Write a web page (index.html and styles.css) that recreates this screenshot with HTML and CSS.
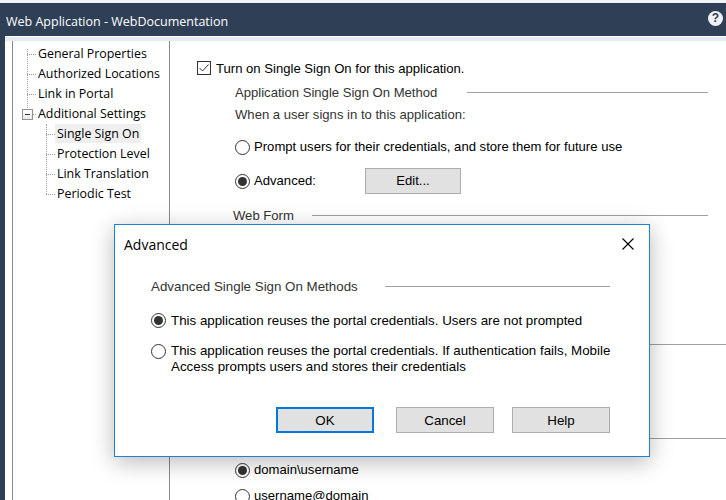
FILE: index.html
```html
<!DOCTYPE html>
<html>
<head>
<meta charset="utf-8">
<link rel="stylesheet" href="styles.css">
</head>
<body>
<div class="app">
  <div class="topstrip"></div>
  <div class="titlebar">
    <span class="title">Web Application - WebDocumentation</span>
    <span class="help">?</span>
  </div>
  <div class="frame">
    <div class="band"></div>
    <div class="main">
      <div class="tree">
        <ul class="tl tl1">
          <li class="tn"><span class="lbl">General Properties</span></li>
          <li class="tn"><span class="lbl">Authorized Locations</span></li>
          <li class="tn"><span class="lbl">Link in Portal</span></li>
          <li class="tn"><span class="exp"></span><span class="lbl">Additional Settings</span></li>
        </ul>
        <ul class="tl tl2">
          <li class="tn"><span class="lbl sel">Single Sign On</span></li>
          <li class="tn"><span class="lbl">Protection Level</span></li>
          <li class="tn"><span class="lbl">Link Translation</span></li>
          <li class="tn"><span class="lbl">Periodic Test</span></li>
        </ul>
      </div>
      <div class="pane">
        <div class="chk-row">
          <span class="checkbox"><svg width="12" height="12" viewBox="0 0 12 12"><polyline points="1.5,6 4.5,9 10.5,2.5" fill="none" stroke="#333" stroke-width="1"/></svg></span>
          <span>Turn on Single Sign On for this application.</span>
        </div>
        <div class="sect">
          <div class="heading h-app"><span class="htext">Application Single Sign On Method</span><span class="rule"></span></div>
          <div class="row when">When a user signs in to this application:</div>
          <div class="row opt r1"><span class="radio"></span><span>Prompt users for their credentials, and store them for future use</span></div>
          <div class="row opt adv"><span class="radio on"></span><span class="adv-label">Advanced:</span><span class="btn edit">Edit...</span></div>
          <div class="heading h-wf"><span class="htext">Web Form</span><span class="rule"></span></div>
          <div class="divider d1"></div>
          <div class="divider d2"></div>
          <div class="row opt dom"><span class="radio on"></span><span>domain\username</span></div>
          <div class="row opt usr"><span class="radio"></span><span>username@domain</span></div>
        </div>
      </div>
    </div>
  </div>

  <div class="dialog">
    <div class="dlg-title">
      <span>Advanced</span>
      <svg class="close" width="12" height="12" viewBox="0 0 12 12"><path d="M0.5 0.5 L11.5 11.5 M11.5 0.5 L0.5 11.5" stroke="#000" stroke-width="1.1" fill="none"/></svg>
    </div>
    <div class="dlg-body">
      <div class="heading dh"><span class="htext">Advanced Single Sign On Methods</span><span class="rule"></span></div>
      <div class="opt d-r1"><span class="radio on"></span><span>This application reuses the portal credentials. Users are not prompted</span></div>
      <div class="opt d-r2"><span class="radio"></span><span class="two">This application reuses the portal credentials. If authentication fails, Mobile<br>Access prompts users and stores their credentials</span></div>
      <div class="btns">
        <span class="btn dbtn ok">OK</span>
        <span class="btn dbtn">Cancel</span>
        <span class="btn dbtn">Help</span>
      </div>
    </div>
  </div>
</div>
</body>
</html>
```

FILE: styles.css
```css
html, body {
  margin: 0;
  padding: 0;
}
body {
  width: 726px;
  height: 500px;
  overflow: hidden;
  background: #fff;
  font-family: "Liberation Sans", Arial, sans-serif;
  font-size: 13.1px;
  color: #000;
}
.app {
  position: relative;
  height: 500px;
}
.topstrip {
  height: 3px;
  background: #f3f4f7;
}
.titlebar {
  height: 33px;
  background: #2e3f56;
  color: #fff;
  display: flex;
  align-items: center;
  justify-content: space-between;
  padding: 0 3px 0 6px;
  font-family: "Open Sans", sans-serif;
  font-size: 12.5px;
}
.title {
  padding-top: 4px;
}
.help {
  width: 15px;
  height: 15px;
  margin-top: -2px;
  border-radius: 50%;
  background: #eef2f7;
  color: #2e3f56;
  font-weight: bold;
  font-size: 12px;
  line-height: 15px;
  text-align: center;
  font-family: "Liberation Sans", sans-serif;
}
.frame {
  border-left: 5px solid #2e3f56;
  height: 464px;
}
.band {
  height: 4px;
  border-top: 1px solid #fff;
  background: #e3eaf0;
}
.main {
  display: flex;
  padding-left: 7px;
  height: 459px;
}
.tree {
  width: 156px;
  border-left: 1px solid #8a8a8a;
  border-right: 1px solid #8a8a8a;
  padding-top: 3px;
  font-family: "Open Sans", sans-serif;
  font-size: 12.4px;
  color: #000;
}
.tl {
  list-style: none;
  margin: 0;
  padding: 0;
  position: relative;
}
.tl::before {
  content: "";
  position: absolute;
  left: 14px;
  top: 5px;
  bottom: 10px;
  border-left: 1px dotted #a0a0a0;
}
.tl2::before {
  left: 33px;
  top: 0;
}
.tn {
  position: relative;
  height: 20px;
  line-height: 20px;
  padding-left: 23px;
  white-space: nowrap;
}
.tl2 .tn {
  padding-left: 42px;
}
.tn::before {
  content: "";
  position: absolute;
  left: 14px;
  top: 10px;
  width: 9px;
  border-top: 1px dotted #a0a0a0;
}
.tl2 .tn::before {
  left: 33px;
}
.lbl {
  display: inline-block;
  padding: 0 2px;
  line-height: 19px;
}
.sel {
  background: #efefef;
}
.exp {
  position: absolute;
  left: 9px;
  top: 5px;
  width: 9px;
  height: 9px;
  border: 1px solid #919191;
  background: linear-gradient(#fff, #eaeaea);
  z-index: 1;
}
.exp::after {
  content: "";
  position: absolute;
  left: 2px;
  top: 4px;
  width: 5px;
  height: 1px;
  background: #333;
}
.pane {
  flex: 1;
  padding: 0 18px 0 27px;
}
.chk-row {
  display: flex;
  align-items: center;
  gap: 5px;
  height: 20px;
  margin-top: 17px;
}
.checkbox {
  width: 14px;
  height: 14px;
  box-sizing: border-box;
  border: 1px solid #333;
  display: flex;
  align-items: center;
  justify-content: center;
  background: #fff;
}
.sect {
  padding-left: 38px;
}
.heading {
  display: flex;
  align-items: center;
  height: 20px;
  color: #333;
}
.rule {
  flex: 1;
  height: 1px;
  background: #a0a0a0;
}
.h-app {
  margin-top: 4px;
}
.h-app .rule {
  margin-left: 30px;
}
.h-wf {
  margin-top: 11px;
  margin-left: -2px;
}
.h-wf .rule {
  margin-left: 18px;
}
.row {
  height: 20px;
  line-height: 20px;
}
.when {
  margin-top: 3px;
  color: #333;
}
.opt {
  display: flex;
  align-items: center;
  gap: 4px;
  white-space: nowrap;
}
.r1 {
  margin-top: 12px;
}
.adv {
  margin-top: 11px;
  height: 26px;
}
.adv-label {
  width: 107px;
}
.radio {
  width: 15px;
  height: 15px;
  box-sizing: border-box;
  border: 1px solid #333;
  border-radius: 50%;
  background: #fff;
  display: flex;
  align-items: center;
  justify-content: center;
  flex: none;
}
.radio.on::after {
  content: "";
  width: 9px;
  height: 9px;
  border-radius: 50%;
  background: #333;
}
.btn {
  display: flex;
  align-items: center;
  justify-content: center;
  background: #e1e1e1;
  border: 1px solid #adadad;
  box-sizing: border-box;
  height: 26px;
}
.edit {
  width: 96px;
}
.divider {
  border-top: 1px solid #a0a0a0;
  margin-right: -18px;
}
.d1 {
  margin-top: 119px;
}
.d2 {
  margin-top: 93px;
}
.dom {
  margin-top: 21px;
}
.usr {
  margin-top: 6px;
}

.dialog {
  position: absolute;
  left: 114px;
  top: 224px;
  width: 536px;
  height: 233px;
  box-sizing: border-box;
  border: 1px solid #1883d7;
  background: #fff;
  box-shadow: 0 5px 22px rgba(0, 0, 0, 0.28);
  font-size: 13.33px;
}
.dlg-title {
  height: 38px;
  display: flex;
  align-items: center;
  justify-content: space-between;
  padding: 0 15px 0 9px;
  font-family: "Open Sans", sans-serif;
  font-size: 14px;
}
.dlg-body {
  padding: 0 39px 0 36px;
}
.dh {
  margin-top: 13px;
}
.dh .rule {
  margin-left: 27px;
}
.d-r1 {
  margin-top: 14px;
  height: 20px;
  gap: 5px;
}
.d-r2 {
  margin-top: 13px;
  align-items: flex-start;
  gap: 5px;
}
.d-r2 .radio {
  margin-top: 1px;
}
.two {
  line-height: 16px;
}
.btns {
  display: flex;
  justify-content: flex-end;
  gap: 18px;
  margin-top: 32px;
}
.dbtn {
  width: 98px;
}
.ok {
  border: 2px solid #0078d7;
  margin-right: 4px;
}
```
